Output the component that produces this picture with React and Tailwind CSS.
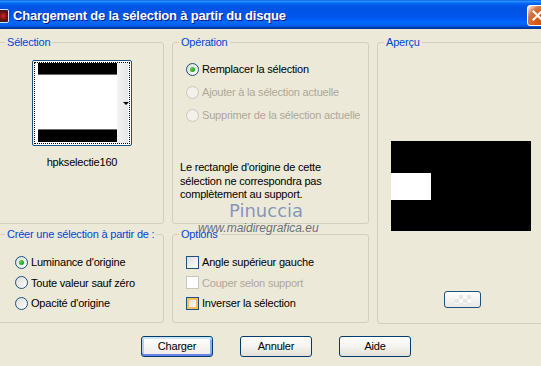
import React from "react";

function Radio({ checked, disabled }) {
  return (
    <span
      className={
        disabled
          ? "w-[13px] h-[13px] rounded-full border border-[#CAC8BB] bg-[#F2F1EA] flex items-center justify-center shrink-0"
          : "w-[13px] h-[13px] rounded-full border border-[#1C5180] bg-gradient-to-br from-[#DCDCD7] to-white flex items-center justify-center shrink-0"
      }
    >
      {checked && <span className="w-[5px] h-[5px] rounded-full bg-[radial-gradient(circle_at_35%_35%,#55D455,#21A121_70%)]" />}
    </span>
  );
}

function Check({ disabled, hover }) {
  if (disabled)
    return <span className="w-[13px] h-[13px] border border-[#CAC8BB] bg-white shrink-0" />;
  if (hover)
    return (
      <span className="w-[13px] h-[13px] border border-[#1C5180] bg-gradient-to-br from-[#DCDCD7] to-white shrink-0 shadow-[inset_0_0_0_2px_#F8BE57]" />
    );
  return <span className="w-[13px] h-[13px] border border-[#1C5180] bg-gradient-to-br from-[#DCDCD7] to-white shrink-0" />;
}

function Group({ label, className, children }) {
  return (
    <fieldset className={"border border-[#D0D0BF] rounded-[3px] m-0 p-0 min-w-0 shrink-0 " + className}>
      <legend className="ml-[6px] px-[2px] text-[#0046D5] leading-[13px]">{label}</legend>
      {children}
    </fieldset>
  );
}

function XPButton({ children, def }) {
  return (
    <div
      className={
        def
          ? "w-[72px] h-[21px] border border-[#003C74] rounded-[3px] bg-gradient-to-b from-white to-[#ECEBE6] flex items-center justify-center shadow-[inset_0_2px_0_#CEE7FF,inset_0_-2px_0_#6982EE,inset_2px_0_0_#B3CDF5,inset_-2px_0_0_#8FAAF0]"
          : "w-[72px] h-[21px] border border-[#003C74] rounded-[3px] bg-gradient-to-b from-white via-[#F4F3EE] to-[#E3E1D6] flex items-center justify-center"
      }
    >
      <span className="leading-[13px]">{children}</span>
    </div>
  );
}

export default function App() {
  return (
    <div className="relative w-[541px] h-[366px] overflow-hidden bg-[#ECE9D8] flex flex-col text-[11px] tracking-[-0.2px] text-black font-['Liberation_Sans',Arial,sans-serif]">
      {/* Title bar */}
      <div className="h-[29px] shrink-0 flex items-center bg-[linear-gradient(180deg,#0058EE_0%,#3593FF_4%,#288EFF_6%,#127DFF_8%,#036FFC_10%,#0262EE_14%,#0057E5_20%,#0054E3_24%,#0055EB_56%,#005BF5_66%,#026AFE_76%,#0062EF_86%,#0052D6_92%,#0040AB_94%,#003092_100%)]">
        <div className="ml-[-5px] w-[14px] h-[14px] mt-[2px] rounded-[2px] bg-[radial-gradient(circle_at_60%_50%,#D22_0%,#611_45%,#222_75%)] border border-[#DDE]" />
        <span className="ml-[4px] mt-[2px] text-white font-bold text-[13px] tracking-[-0.2px] [text-shadow:1px_1px_#0A1883]">
          Chargement de la sélection à partir du disque
        </span>
        <div className="ml-auto mr-[-7px] mt-[1px] w-[21px] h-[21px] rounded-[3px] border border-white bg-[radial-gradient(circle_at_90%_90%,#CC4600_0%,#DC6527_55%,#CD7546_70%,#FFCCB2_90%,#FFFFFF_100%)] flex items-center justify-center shrink-0">
          <svg width="11" height="11" viewBox="0 0 11 11">
            <path d="M1.5 1.5 L9.5 9.5 M9.5 1.5 L1.5 9.5" stroke="white" strokeWidth="2.2" strokeLinecap="square" />
          </svg>
        </div>
      </div>

      {/* Body */}
      <div className="flex gap-[8px] pt-[7px] ml-[-2px] shrink-0">
        <div className="flex flex-col gap-[4px] w-[166px] shrink-0">
          <Group label="Sélection" className="h-[188px]">
            <div className="ml-[33px] mt-[11px] w-[100px] h-[86px] border border-[#1C5180] rounded-[2px] bg-white p-[1px]">
              <div className="relative h-full border border-dotted border-black flex">
                <div className="w-[3px] shrink-0" />
                <div className="w-[79px] shrink-0 flex flex-col">
                  <div className="h-[12px] bg-black border-b border-[#6A6A6A]" />
                  <div className="flex-1" />
                  <div className="h-[13px] bg-black border-t border-[#6A6A6A]" />
                  <div className="h-[1px]" />
                </div>
                <div className="w-[11px] shrink-0 bg-gradient-to-r from-[#F4F4F4] to-[#E6E6E6]" />
                <div className="absolute right-[0px] top-[39px] w-0 h-0 border-x-[3px] border-x-transparent border-t-[3px] border-t-black" />
              </div>
            </div>
            <div className="mt-[10px] text-center pl-[2px] leading-[13px]">hpkselectie160</div>
          </Group>
          <Group label="Créer une sélection à partir de :" className="h-[95px]">
            <div className="pt-[11px] pl-[16px] flex flex-col">
              <div className="h-[20.5px] flex items-center gap-[3px]"><Radio checked /><span>Luminance d'origine</span></div>
              <div className="h-[20.5px] flex items-center gap-[3px]"><Radio /><span>Toute valeur sauf zéro</span></div>
              <div className="h-[20.5px] flex items-center gap-[3px]"><Radio /><span>Opacité d'origine</span></div>
            </div>
          </Group>
        </div>

        <div className="flex flex-col gap-[4px] w-[197px] shrink-0">
          <Group label="Opération" className="h-[188px]">
            <div className="pt-[9px] pl-[13px] flex flex-col">
              <div className="h-[23px] flex items-center gap-[3px]"><Radio checked /><span>Remplacer la sélection</span></div>
              <div className="h-[23px] flex items-center gap-[3px] text-[#ACA899]"><Radio disabled /><span>Ajouter à la sélection actuelle</span></div>
              <div className="h-[23px] flex items-center gap-[3px] text-[#ACA899]"><Radio disabled /><span>Supprimer de la sélection actuelle</span></div>
            </div>
            <p className="mt-[34px] pl-[7px] leading-[13.5px]">
              Le rectangle d'origine de cette
              <br />
              sélection ne correspondra pas
              <br />
              complètement au support.
            </p>
          </Group>
          <Group label="Options" className="h-[95px]">
            <div className="pt-[11px] pl-[13px] flex flex-col">
              <div className="h-[20.5px] flex items-center gap-[3px]"><Check /><span>Angle supérieur gauche</span></div>
              <div className="h-[20.5px] flex items-center gap-[3px] text-[#ACA899]"><Check disabled /><span>Couper selon support</span></div>
              <div className="h-[20.5px] flex items-center gap-[3px]"><Check hover /><span>Inverser la sélection</span></div>
            </div>
          </Group>
        </div>

        <Group label="Aperçu" className="w-[170px] h-[288px]">
          <div className="mt-[92px] ml-[13px] w-[140px] h-[90px] bg-black pt-[32px]">
            <div className="w-[40px] h-[27px] bg-white" />
          </div>
          <div className="mt-[60px] ml-[66px] w-[37px] h-[17px] border border-[#1C5180] rounded-[3px] bg-gradient-to-b from-white to-[#E8E8E4] p-[3px] flex justify-center">
            <div className="w-[16px] h-full bg-[repeating-conic-gradient(#E6E6E6_0%_25%,#FAFAFA_0%_50%)] bg-[length:8px_8px]" />
          </div>
        </Group>
      </div>

      {/* Buttons */}
      <div className="flex gap-[27px] pl-[141px] mt-[12px] shrink-0">
        <XPButton def>Charger</XPButton>
        <XPButton>Annuler</XPButton>
        <XPButton>Aide</XPButton>
      </div>

      {/* Watermark overlay */}
      <div className="absolute left-[229px] top-[200px] text-[18px] leading-[22px] tracking-normal text-[#8B93B3] font-['DejaVu_Sans',sans-serif] [text-shadow:0_0_1px_#F4F4FA]">
        Pinuccia
      </div>
      <div className="absolute left-[198px] top-[221px] text-[12px] leading-[14px] tracking-normal italic text-[#6E6E7C] font-['Liberation_Sans',Arial,sans-serif]">
        www.maidiregrafica.eu
      </div>
    </div>
  );
}
